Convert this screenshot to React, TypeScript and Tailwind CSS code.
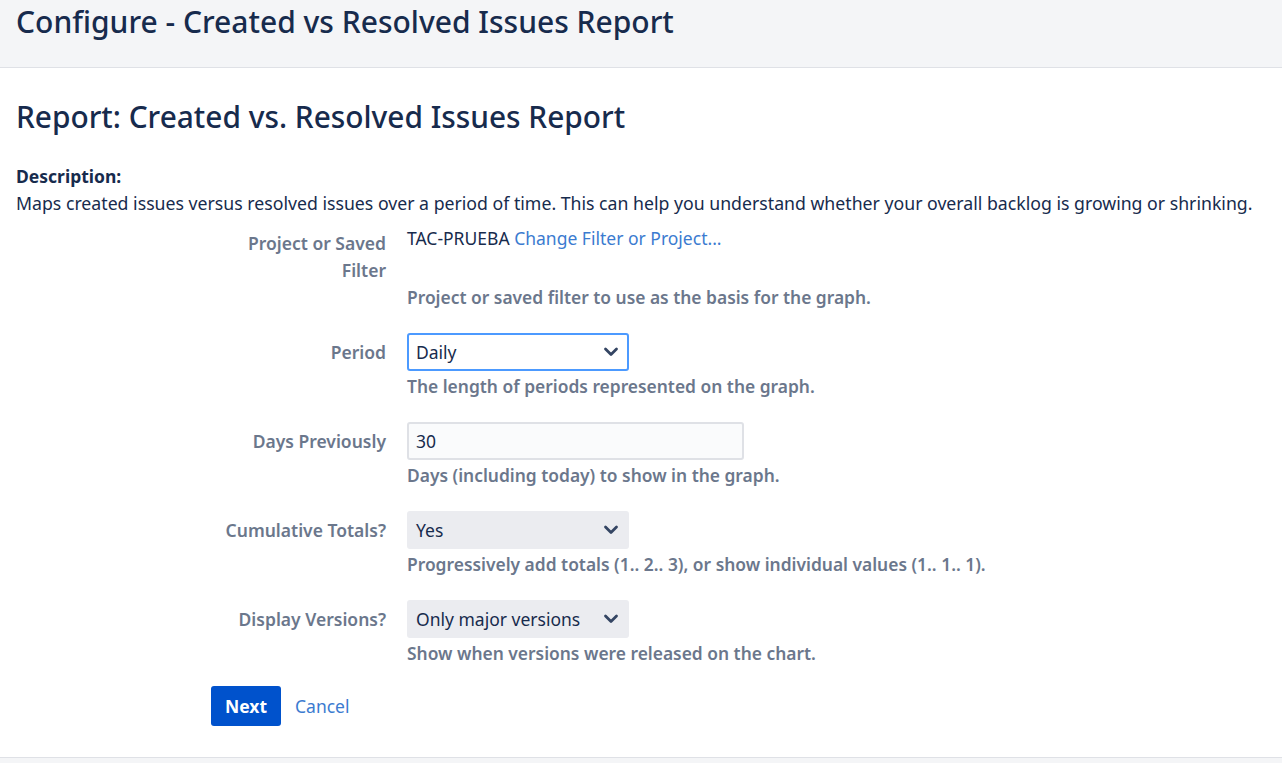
import React from "react";

const Chevron = () => (
  <svg width="20" height="20" viewBox="0 0 20 20" fill="none">
    <path d="M4.5 7 L10 12.5 L15.5 7" stroke="#344563" strokeWidth="2.8" strokeLinecap="round" strokeLinejoin="round" />
  </svg>
);

function Select({ value, focused, width }: { value: string; focused?: boolean; width: string }) {
  return (
    <div
      className={
        "h-[38px] rounded-[3px] flex items-center justify-between pl-[7px] pr-[6px] " +
        width +
        (focused ? " bg-white border-2 border-[#4c9aff]" : " bg-[#ebecf0] border-2 border-[#ebecf0]")
      }
    >
      <span className="text-[#172b4d]">{value}</span>
      <Chevron />
    </div>
  );
}

function Row({ label, children, desc, first }: { label: React.ReactNode; children: React.ReactNode; desc: string; first?: boolean }) {
  return (
    <div className={"flex " + (first ? "" : "mt-[22px]")}>
      <div className="w-[165px] ml-[205px] text-right font-semibold text-[#6b778c] pt-[6px] leading-[27px]">{label}</div>
      <div className="ml-[21px] flex flex-col">
        {children}
        <div className="font-semibold text-[#6b778c] leading-[28px] mt-[1px] text-[17.4px]">{desc}</div>
      </div>
    </div>
  );
}

export default function App() {
  return (
    <div className="w-[1282px] h-[763px] bg-white text-[#172b4d] text-[17.5px] overflow-hidden flex flex-col" style={{ fontFamily: '"Noto Sans", "Open Sans", sans-serif' }}>
      <div className="h-[68px] bg-[#f4f5f7] border-b border-[#dfe1e6] px-4 shrink-0">
        <h1 className="text-[30px] font-medium leading-[44px] text-[#172b4d]">Configure - Created vs Resolved Issues Report</h1>
      </div>
      <div className="px-4 flex-1">
        <h2 className="text-[29.85px] font-medium leading-[40px] mt-[29px]">Report: Created vs. Resolved Issues Report</h2>
        <div className="mt-[26px] font-bold leading-[27px]">Description:</div>
        <p className="leading-[27px] text-[17.7px]">Maps created issues versus resolved issues over a period of time. This can help you understand whether your overall backlog is growing or shrinking.</p>
        <div className="mt-[7px]">
          <Row first label={<>Project or Saved Filter</>} desc="Project or saved filter to use as the basis for the graph.">
            <div className="leading-[28px] mb-[30px]">
              <span className="text-[#172b4d]">TAC-PRUEBA</span>{" "}
              <a className="text-[#3b7bd0]">Change Filter or Project...</a>
            </div>
          </Row>
          <Row label="Period" desc="The length of periods represented on the graph.">
            <Select value="Daily" focused width="w-[222px]" />
          </Row>
          <Row label="Days Previously" desc="Days (including today) to show in the graph.">
            <div className="h-[38px] w-[337px] rounded-[3px] bg-[#fafbfc] border-2 border-[#dfe1e6] flex items-center pl-[7px]">30</div>
          </Row>
          <Row label="Cumulative Totals?" desc="Progressively add totals (1.. 2.. 3), or show individual values (1.. 1.. 1).">
            <Select value="Yes" width="w-[222px]" />
          </Row>
          <Row label="Display Versions?" desc="Show when versions were released on the chart.">
            <Select value="Only major versions" width="w-[222px]" />
          </Row>
          <div className="flex items-center mt-[19px] ml-[195px]">
            <button className="h-[40px] w-[70px] rounded-[3px] bg-[#0052cc] text-white font-bold">Next</button>
            <a className="ml-[14px] text-[#3b7bd0]">Cancel</a>
          </div>
        </div>
      </div>
      <div className="h-[6px] border-t border-[#dfe1e6] bg-[#f4f5f7] shrink-0" />
    </div>
  );
}
